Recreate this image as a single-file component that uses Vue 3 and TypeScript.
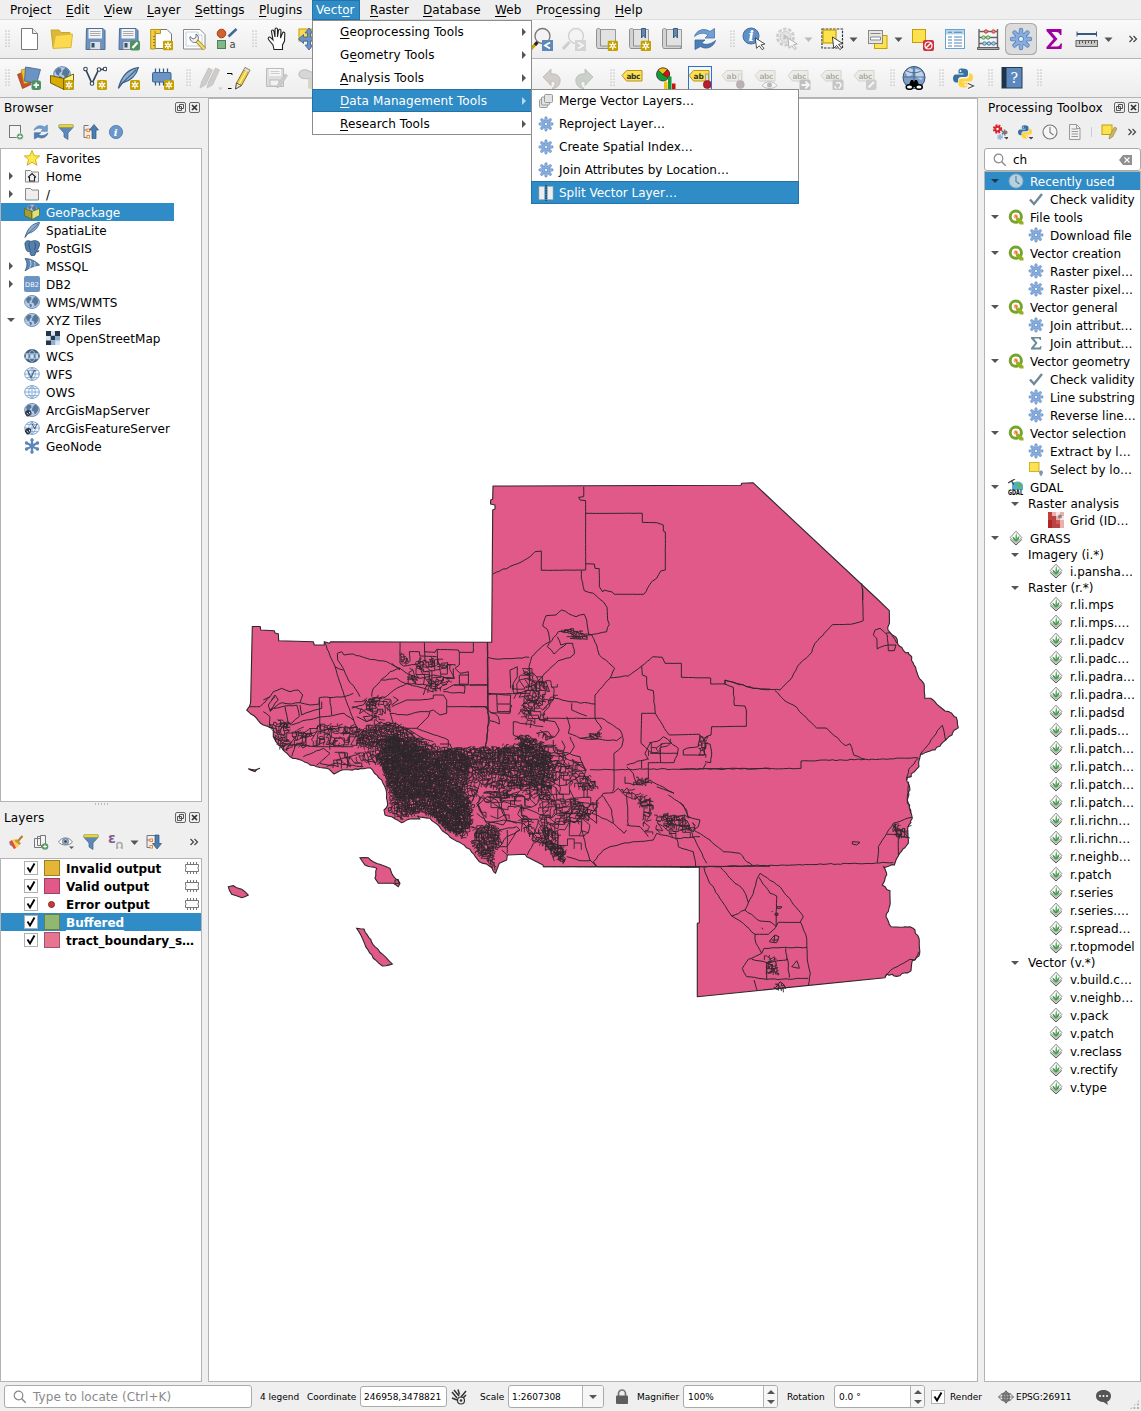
<script setup lang="ts">
interface ToolItem { icon: string; width: number; lead: number; on?: string }
type ToolSpec = [icon: string, center: number, state?: string]

const widths: Record<string, number> = { grip: 5, drop: 9, more: 12 }

function layoutTools(specs: ToolSpec[]): ToolItem[] {
  let edge = 0
  return specs.map(([icon, center, on]) => {
    const width = widths[icon] ?? 24
    const lead = center - width / 2 - edge
    edge = center + width / 2
    return { icon, width, lead, on }
  })
}

const menus: { text: [string, string, string]; width: number; open?: boolean }[] = [
  { text: ['Pro', 'j', 'ect'], width: 56 },
  { text: ['', 'E', 'dit'], width: 38 },
  { text: ['', 'V', 'iew'], width: 43 },
  { text: ['', 'L', 'ayer'], width: 48 },
  { text: ['', 'S', 'ettings'], width: 64 },
  { text: ['', 'P', 'lugins'], width: 57 },
  { text: ['Vect', 'o', 'r'], width: 54, open: true },
  { text: ['', 'R', 'aster'], width: 53 },
  { text: ['', 'D', 'atabase'], width: 72 },
  { text: ['', 'W', 'eb'], width: 41 },
  { text: ['Pro', 'c', 'essing'], width: 79 },
  { text: ['', 'H', 'elp'], width: 40 },
]

const vectorMenu: { text: [string, string, string]; on?: boolean }[] = [
  { text: ['', 'G', 'eoprocessing Tools'] },
  { text: ['G', 'e', 'ometry Tools'] },
  { text: ['', 'A', 'nalysis Tools'] },
  { text: ['', 'D', 'ata Management Tools'], on: true },
  { text: ['', 'R', 'esearch Tools'] },
]

const dataMenu = [
  { icon: 'merge', text: 'Merge Vector Layers…' },
  { icon: 'gear', text: 'Reproject Layer…' },
  { icon: 'gear', text: 'Create Spatial Index…' },
  { icon: 'gear', text: 'Join Attributes by Location…' },
  { icon: 'split', text: 'Split Vector Layer…', on: true },
]

const fileTools = layoutTools([
  ['grip', 7.5], ['new', 29], ['open', 62], ['save', 95], ['saveas', 129], ['layout', 162], ['layoutmgr', 195], ['style', 227],
  ['grip', 254.5], ['hand', 277], ['pan', 309], ['zoomprev', 542], ['zoomnext', 574], ['bookmark', 607], ['bookmarknew', 640],
  ['bookmarks', 672], ['refresh', 705], ['grip', 732], ['identify', 754], ['action', 787], ['drop', 808.5, 'dim'], ['select', 832],
  ['drop', 853.5], ['form', 878], ['drop', 898.5], ['deselect', 923], ['table', 955], ['abacus', 988], ['gear', 1021, 'checked'],
  ['sigma', 1054], ['ruler', 1087], ['drop', 1108.5], ['more', 1133],
])

const editTools = layoutTools([
  ['grip', 7.5], ['dsm', 29], ['gpkg', 62], ['vertex', 95], ['feathernew', 128], ['chipnew', 162], ['grip', 188], ['pencils', 211],
  ['pencil', 239], ['saveedits', 276], ['blob', 307], ['undo', 552], ['redo', 584], ['grip', 612], ['label', 633], ['diagram', 667],
  ['labelpin', 700, 'framed'], ['labelpin', 733, 'faded'], ['labeleye', 766, 'faded'], ['labelmove', 799, 'faded'],
  ['labelturn', 832, 'faded'], ['labeledit', 865, 'faded'], ['grip', 892], ['search', 914], ['grip', 941], ['python', 963],
  ['grip', 990], ['help', 1012], ['grip', 1039],
])

const browser: { text: string; icon: string; arrow?: string; child?: boolean; on?: boolean }[] = [
  { text: 'Favorites', icon: 'star' },
  { text: 'Home', icon: 'home', arrow: 'right' },
  { text: '/', icon: 'folder', arrow: 'right' },
  { text: 'GeoPackage', icon: 'gpkgs', on: true },
  { text: 'SpatiaLite', icon: 'feather' },
  { text: 'PostGIS', icon: 'elephant' },
  { text: 'MSSQL', icon: 'mssql', arrow: 'right' },
  { text: 'DB2', icon: 'db2', arrow: 'right' },
  { text: 'WMS/WMTS', icon: 'globe' },
  { text: 'XYZ Tiles', icon: 'globe', arrow: 'down' },
  { text: 'OpenStreetMap', icon: 'tiles', child: true },
  { text: 'WCS', icon: 'wcs' },
  { text: 'WFS', icon: 'wfs' },
  { text: 'OWS', icon: 'ows' },
  { text: 'ArcGisMapServer', icon: 'arcmap' },
  { text: 'ArcGisFeatureServer', icon: 'arcfeat' },
  { text: 'GeoNode', icon: 'geonode' },
]

const layers = [
  { text: 'Invalid output', tone: 'amber', memory: true },
  { text: 'Valid output', tone: 'pink', memory: true },
  { text: 'Error output', tone: 'dot', memory: true },
  { text: 'Buffered', tone: 'green', on: true },
  { text: 'tract_boundary_s…', tone: 'rose' },
]

type Row = [depth: number, icon: string, text: string, on?: boolean]
const toolbox: Row[] = [
  [0, 'clock', 'Recently used', true], [1, 'check', 'Check validity'],
  [0, 'qgis', 'File tools'], [1, 'gear', 'Download file'],
  [0, 'qgis', 'Vector creation'], [1, 'gear', 'Raster pixel…'], [1, 'gear', 'Raster pixel…'],
  [0, 'qgis', 'Vector general'], [1, 'gear', 'Join attribut…'], [1, 'sum', 'Join attribut…'],
  [0, 'qgis', 'Vector geometry'], [1, 'check', 'Check validity'], [1, 'gear', 'Line substring'], [1, 'gear', 'Reverse line…'],
  [0, 'qgis', 'Vector selection'], [1, 'gear', 'Extract by l…'], [1, 'selectloc', 'Select by lo…'],
  [0, 'gdal', 'GDAL'], [1, '', 'Raster analysis'], [2, 'grid', 'Grid (ID…'],
  [0, 'grass', 'GRASS'], [1, '', 'Imagery (i.*)'], [2, 'grass', 'i.pansha…'],
  [1, '', 'Raster (r.*)'],
  ...['r.li.mps', 'r.li.mps.…', 'r.li.padcv', 'r.li.padc…', 'r.li.padra…', 'r.li.padra…', 'r.li.padsd', 'r.li.pads…', 'r.li.patch…',
    'r.li.patch…', 'r.li.patch…', 'r.li.patch…', 'r.li.richn…', 'r.li.richn…', 'r.neighb…', 'r.patch', 'r.series', 'r.series.…',
    'r.spread…', 'r.topmodel'].map((t): Row => [2, 'grass', t]),
  [1, '', 'Vector (v.*)'],
  ...['v.build.c…', 'v.neighb…', 'v.pack', 'v.patch', 'v.reclass', 'v.rectify', 'v.type'].map((t): Row => [2, 'grass', t]),
]

/* ---- map canvas ---- */
type Pt = [number, number]
let seed = 20117
function rnd(): number {
  seed = (seed * 1664525 + 1013904223) % 4294967296
  return seed / 4294967296
}
const parse = (s: string): Pt[] => s.trim().split(/\s+/).map((p) => p.split(',').map(Number) as Pt)
const toPath = (pts: Pt[]): string => 'M' + pts.map((p) => p[0].toFixed(1) + ' ' + p[1].toFixed(1)).join('L')

function rough(pts: Pt[], amp: number, step: number): Pt[] {
  const out: Pt[] = [pts[0]]
  for (let i = 1; i < pts.length; i++) {
    const [x0, y0] = pts[i - 1]
    const [x1, y1] = pts[i]
    // Survey lines that follow a parallel or meridian stay straight.
    const straight = Math.abs(x1 - x0) < 1 || Math.abs(y1 - y0) < 1
    const n = Math.floor(Math.hypot(x1 - x0, y1 - y0) / step)
    const a = straight ? amp * 0.2 : amp
    for (let k = 1; k < n; k++) {
      out.push([x0 + ((x1 - x0) * k) / n + (rnd() - 0.5) * a, y0 + ((y1 - y0) * k) / n + (rnd() - 0.5) * a])
    }
    out.push(pts[i])
  }
  return out
}

const north = parse('250.7,700 252.3,626.5 260.3,626.5 260.7,630 274.3,630.7 275,633 278.3,633.7 278.7,640.7 313.3,641.7 314.3,645 324.3,645 324.3,641.7 329.3,643.3 330.7,641.7 491.7,642.3 492.7,510 495,509 495,505 490.5,504 490.7,500 492.7,499.3 493,486 741,485.3 741.7,483.3 753,482.7 878.3,600 889.3,610.7 889.5,623')
const east = parse('889.5,623 888,630 890.7,633.3 896,637.3 898.3,645 911.7,656.7 914,665 917.3,673.3 924.3,686 924.7,698.3 930.7,698.3 945,711 951.7,713.3 957.3,720.7 958.3,727.7 945.7,740 935,750 920.7,754 918.7,761.7 919,766.7 906.7,780 910,790 907.3,800 910.7,810 912.3,818.3 907.7,830 908.3,843.3 898.3,856 894.3,865 883.3,866.7 886.7,875 882.3,885 890,890.7 890,905 886,916.7 891,926.7 900,927.3 910,926.7 915,930 919,938.3 919.7,953.3 911.7,963.3 911,970.7 900,975.7 886.7,974 885,977.7')
const south = parse('885,977.7 697.3,996.7 697.3,923.3 699.3,922.7 699.3,867.2 543.3,866.7 543,865 526.7,856.7 525,854.3 507.3,855 506.7,860 499.3,863.3 495.5,873.3')
const coast = parse('495.5,873.3 489.3,866 479.3,861.7 470,849.3 450,837.3 430,818.3 417.3,816 420,819 410,819 401.7,822.7 391.7,816.7 385,815 384,810 387.7,805 386.7,793.3 381.7,780 370,767.7 340,770.7 334,774 329.3,769.3 316.7,766.7 290,756.7 278.3,745 273.3,736.7 273.3,728.3 263.3,725 246.7,710 249.3,706.7 250.7,700')
const land = toPath([...north, ...rough(east, 2.2, 2.5), ...south, ...rough(coast, 1.3, 3)]) + 'Z'

const islands = [
  '360,857.7 368.3,857.7 373.3,861.7 390,868.3 391.7,873.3 400,883.3 398.3,886.7 393.3,883.3 378.3,883.3 375,878.3 376.7,868.3 365,865 360,857.7',
  '228.3,886.7 233.3,885.7 241.7,889.3 248.3,895 241.7,897.7 231.7,894.3 228.3,886.7',
  '356.7,928.3 364,929 373.3,945 392.3,964 382.3,966 373.3,958.3 365.7,946.7 361.7,936.7 356.7,928.3',
  '248.3,768.7 255,770 260,768.3 255,771.7 248.3,768.7',
].map((s) => toPath(rough(parse(s), 1.2, 3)) + 'Z').join('')

// Tract borders, digitised at three times canvas scale from each sheet's origin.
const sheets: { ox: number; oy: number; lines: string[] }[] = [
  { ox: 220, oy: 600, lines: [
    '313,125 345,200 372,285 412,385', '88,320 120,320 150,290 160,275 185,265 210,275 235,270 248,285 240,308 215,312 185,308 150,332 145,315 165,290',
    '240,308 270,315 298,312 298,293 372,290 400,280', '130,335 150,350 148,380', '150,335 160,325 195,318 230,315 238,350 215,370 205,370 195,320',
    '240,315 245,345 270,335 305,325 305,305', '330,293 335,345', '298,300 300,390', '215,375 260,360 310,350 345,345 372,340 400,360',
    '352,160 365,155 372,165 400,162 440,175 500,185 540,205', '352,160 353,180 370,205 385,240 405,265 420,290', '345,200 370,210',
    '540,127 540,190', '613,127 615,185', '540,190 550,198 600,190', '570,180 568,155 598,155 600,168 650,170',
    '613,155 645,157 650,148 715,150 718,157 760,157 760,127', '652,150 653,190', '718,157 718,195 705,205 720,220 745,215 745,253 718,252 718,225 745,225',
    '670,270 700,255 803,255', '702,255 735,258 733,280 670,275', '670,285 680,300 680,320 800,320 803,330', '803,127 805,370 797,445',
    '455,290 460,265 480,245 510,215 540,205 560,220', '485,240 530,235 555,250', '515,190 540,210', '490,295 530,265 560,250 620,255 610,285',
    '515,320 560,300 600,300 640,295 640,285 670,285', '510,340 560,345 600,335 625,335 640,330 660,345 680,340 680,320',
    '510,340 520,370 560,385 590,385 625,350 630,335', '590,385 630,400 685,420 685,440', '395,325 430,315 440,300', '410,350 440,365 470,350',
    '397,320 430,330 450,345', '160,410 190,430 240,435 290,440 350,440 400,440', '215,470 230,430 250,430 270,440', '250,470 310,445 330,460 290,495',
    '300,490 355,500 350,480 390,470 420,460', '380,505 390,470', '320,500 345,490 430,500', '770,620 800,590 830,600 860,660 890,670',
    '770,640 800,665 850,675 860,660', '840,690 890,680 900,690', '840,740 860,740 895,690', '155,300 165,285 175,300 150,330',
    '243,437 250,432 256,440 248,444 243,437', '525,840 535,838 538,850 525,850 525,840', '803,280 830,282 832,335 870,335 872,285 832,282',
    '832,312 870,312', '805,330 835,350 838,372 810,362', '660,432 690,432 695,445', '862,690 862,760',
    '560,220 600,235 640,225 700,235 700,205', '600,170 600,210', '555,250 600,262 640,275', '130,300 150,290', '520,290 535,300 515,315',
    '560,385 600,410 640,425', '540,380 570,400 600,425 640,440', '520,370 500,375 480,365', '440,365 430,350 460,345',
  ] },
  { ox: 470, oy: 470, lines: [
    '341,50 341,80 326,82 330,90 347,92 347,300 214,301 214,243 195,245 180,260 150,278 69,312',
    '347,130 517,130 517,157 560,158 580,165 580,183 586,186 586,300 572,303 560,325 545,335 521,373 433,373 427,366 402,360 398,366 388,350 388,296 375,295 373,282 347,281',
    '334,302 334,325 343,362 370,370 400,395 411,412 413,450 418,463 410,485 370,493 357,495 350,450 343,433 318,440 275,420 258,435 228,437 218,468 232,478 240,515',
    '240,515 215,530 185,560 177,590 180,630 197,640 240,595 265,572 300,563 313,552 308,520 290,520 252,552 232,530 265,485 300,478 330,490 365,495',
    '262,500 272,525 290,520', '365,495 380,525 388,555 434,595 420,625 375,675 375,745', '53,562 75,567 178,562', '52,517 53,730 58,740 47,835',
    '420,623 475,618 515,588 548,560 577,562 585,580 634,580 634,622 722,624 722,642 765,642 765,630 850,655 900,659',
    '765,642 790,652 793,706 825,708 829,720 829,769 725,770 723,795 708,800 700,815',
    '515,588 517,615 530,620 533,658 550,662 556,730 565,745 590,785 598,795 690,793', '515,730 556,730', '515,730 513,820 535,840',
    '535,870 525,850 540,820 570,810 580,800 600,815 625,835 622,855 612,878 535,878 535,927', '540,850 622,850', '570,835 572,878',
    '640,840 650,835 685,830 690,795 705,815 703,855 640,855 640,840', '705,820 720,822 725,855 722,878 705,875', '700,895 708,880',
    '360,899 900,895', '375,745 220,745', '255,685 300,695 375,702', '250,690 220,730 220,745', '305,700 305,720 350,738',
    '375,745 395,745 450,780 460,810 455,830 432,850 432,955 428,965', '290,740 300,770 295,790 330,805 380,795 395,775 375,745',
    '330,805 440,812 455,800', '220,750 255,755 268,780 255,800 240,805 210,780', '250,810 250,840 275,860 285,830 275,812',
    '300,800 313,830 300,850 275,860 320,880 350,900', '130,755 130,795 160,810 200,830 240,850', '130,755 220,770', '53,675 75,672 180,670',
    '60,728 120,730 125,705', '0,645 53,645', '0,710 45,710 53,720', '122,655 120,600 142,590 142,620 130,640 130,660',
    '465,920 465,940 510,945 540,930 600,965 612,970 560,950', '595,975 640,1005 655,1040', '470,890 490,910 500,945', '470,885 535,865', '515,895 515,870',
    '380,995 400,970 430,968 445,955 470,980 475,1065', '380,990 380,1010 365,1030 430,1060 462,1090 470,1080', '378,1010 380,1060 345,1030',
    '395,975 425,1020 430,1060', '470,1065 510,1070 535,1100', '380,1190 370,1175 400,1140 420,1130 490,1115 550,1110 560,1090 620,1105 690,1100',
    '670,1080 720,1110 760,1145 810,1150 830,1175 850,1188', '670,1100 690,1140 710,1180', '620,1105 625,1130 670,1145 677,1190',
    '655,1040 690,1050 685,1070 670,1080', '335,1080 350,1140 360,1170 380,1188', '290,1160 330,1172 360,1172', '172,1155 190,1120 220,1100',
    '88,1130 110,1100 150,1080', '112,1155 95,1140', '40,980 100,1020 110,1050', '100,1050 160,1060 200,1100 285,1175', '150,1010 230,1040',
    '220,1190 900,1189', '40,975 20,1000 50,1060 100,1050', '345,900 330,860 260,840',
    '360,800 370,790 385,805 365,808', '200,790 235,785 245,800', '145,810 150,795 170,800', '290,500 350,500 352,508 300,505',
  ] },
  { ox: 680, oy: 600, lines: [
    '548,-35 548,0 550,62 512,73 457,74 405,130 395,157 360,190 330,240 300,270 222,265 135,241 135,253',
    '548,0 545,-50', '285,272 315,303 350,322 370,345 410,384 438,384 497,437 510,431 522,466 555,478',
    '0,508 363,505 363,483 715,474', '722,462 787,376 797,420', '715,474 686,508 680,540',
    '592,148 590,115 580,105 585,90 600,85 622,105 625,152 643,152 648,135 625,135 592,146', '618,100 630,98 650,130',
    '0,802 220,797 640,788', '592,788 595,740 640,670 695,652', '655,712 655,765', '620,703 665,703', '645,670 650,710 685,712 665,690 640,680',
    '517,725 540,727 530,735 517,732 517,725', '0,607 20,630 25,655', '122,803 150,835 190,870 205,908', '650,690 665,690 665,705 650,705',
    '72,803 85,840 155,948 195,930 215,890 232,835 240,820 300,860 370,950 360,967', '237,832 270,880 290,888 288,980',
    '195,930 240,963 270,965 288,980 295,967 362,967 380,1015 382,1080 391,1120 385,1155', '155,948 190,970 225,1003 265,1003 288,982',
    '225,1003 228,1030 245,1060 252,1045 380,1042', '245,1060 205,1078 187,1105 200,1130 260,1138 385,1135', '215,1078 260,1088 320,1080 317,1045',
    '322,1075 328,1133', '222,1140 232,1172', '260,1088 260,1138', '335,1100 350,1082 358,1105 335,1100', '268,1025 285,1005 297,1010 290,1028 268,1025',
    '275,1020 295,1020', '284,1007 282,1026', '292,920 305,920 303,925 292,925 292,920', '285,940 294,940 294,946 285,946 285,940',
    '245,983 249,988', '275,933 278,936', '615,1130 640,1105 690,1078 705,1080 717,1055', '686,545 682,600 692,640', '285,1165 300,1145 315,1160',
  ] },
]
const borders = sheets
  .map(({ ox, oy, lines }) => lines.map((l) => toPath(rough(parse(l).map(([x, y]): Pt => [ox + x / 3, oy + y / 3]), 1.1, 3.5))).join(''))
  .join('')

function inside([x, y]: Pt, poly: Pt[]): boolean {
  let hit = false
  for (let i = 0, j = poly.length - 1; i < poly.length; j = i++) {
    const [xi, yi] = poly[i]
    const [xj, yj] = poly[j]
    if (yi > y !== yj > y && x < ((xj - xi) * (y - yi)) / (yj - yi) + xi) hit = !hit
  }
  return hit
}

function mesh(shape: string, size: number, drop: number, tilt = 0): string {
  const poly = parse(shape)
  const xs = poly.map((p) => p[0])
  const ys = poly.map((p) => p[1])
  const cx = (Math.min(...xs) + Math.max(...xs)) / 2
  const cy = (Math.min(...ys) + Math.max(...ys)) / 2
  const reach = Math.hypot(Math.max(...xs) - cx, Math.max(...ys) - cy)
  const n = Math.ceil((reach * 1.15) / size) + 1
  const c = Math.cos(tilt)
  const s = Math.sin(tilt)
  const phase = rnd() * 6
  const grid: Pt[][] = []
  for (let j = -n; j <= n; j++) {
    const row: Pt[] = []
    for (let i = -n; i <= n; i++) {
      const u = (i + (rnd() - 0.5) * 0.95 + Math.sin(j * 0.8 + phase) * 0.7) * size
      const v = (j + (rnd() - 0.5) * 0.95 + Math.sin(i * 0.7 + phase * 2) * 0.7) * size
      row.push([cx + u * c - v * s, cy + u * s + v * c])
    }
    grid.push(row)
  }
  let d = ''
  const edge = (a: Pt, b: Pt) => {
    if (rnd() >= drop && inside(a, poly) && inside([(a[0] + b[0]) / 2, (a[1] + b[1]) / 2], poly)) {
      const r = rnd()
      if (r < 0.4) d += toPath([a, [b[0], a[1]], b])
      else if (r < 0.6) d += toPath([a, [(a[0] + b[0]) / 2 + (rnd() - 0.5) * size * 0.5, (a[1] + b[1]) / 2 + (rnd() - 0.5) * size * 0.5], b])
      else d += toPath([a, b])
    }
  }
  for (let j = 0; j < 2 * n; j++) {
    for (let i = 0; i < 2 * n; i++) {
      edge(grid[j][i], grid[j][i + 1])
      edge(grid[j][i], grid[j + 1][i])
    }
  }
  return d
}

const tracts = [
  mesh('374,756 384,748 396,742 415,744 432,752 452,748 470,756 470,775 462,790 474,806 470,825 458,836 448,832 432,817 420,812 404,816 396,808 392,790 386,778', 2.1, 0.06),
  mesh('374,756 380,746 392,735 420,738 445,747 500,746 540,744 552,760 545,782 520,790 480,788 468,808 474,826 464,840 450,832 430,815 418,812 402,820 388,813 390,800 384,778', 2.8, 0.1),
  mesh('382,762 396,752 425,754 445,760 450,780 440,795 400,800 388,790', 2.3, 0.05, 0.6),
  mesh('430,795 462,785 470,800 463,835 450,832 432,815', 2.6, 0.08, 0.7),
  mesh('440,748 500,746 512,750 505,775 475,775 455,770', 3, 0.1, 0.5),
  mesh('473,827 490,822 501,829 501,847 495,850 496,871 487,862 480,858 471,846', 2.4, 0.06, 0.4),
  mesh('473,830 490,824 499,831 499,845 490,855 478,855', 3.4, 0.1),
  mesh('354,730 370,724 393,721 410,730 422,742 400,750 372,750 357,746', 2.3, 0.06),
  mesh('357,732 392,723 405,732 395,746 360,745', 3.2, 0.12, 0.5),
  mesh('374,750 396,734 425,748 440,752 420,760 380,766', 2.6, 0.1, 0.4),
  mesh('500,745 520,742 545,750 560,765 552,790 530,788 500,782', 3, 0.12),
  mesh('515,735 530,735 555,752 552,765 530,768 518,755', 2.9, 0.1, 0.6),
  mesh('535,740 550,742 570,757 585,764 590,775 570,772 550,764', 4, 0.2, 0.4),
  mesh('550,758 570,764 590,775 598,790 580,788 560,780 548,790 530,800 520,790', 4.4, 0.18, 0.4),
  mesh('576,776 592,776 598,788 586,792 578,788', 2.8, 0.15),
  mesh('500,762 560,762 590,790 597,805 588,835 566,862 545,855 520,828 505,805 480,796 490,790', 8, 0.3, 0.3),
  mesh('532,782 550,786 550,800 535,800', 2.9, 0.12),
  mesh('540,787 562,797 597,802 600,812 588,822 560,826 558,840 566,862 554,858 538,835', 4, 0.2),
  mesh('536,830 545,826 560,828 558,842 568,850 560,862 548,850', 3.3, 0.15, 0.7),
  mesh('518,817 526,815 540,832 558,848 552,852 530,838', 3.2, 0.15, 0.7),
  mesh('556,843 566,848 566,864 557,860 548,845', 2.6, 0.1, 0.6),
  mesh('573,797 587,805 591,815 580,819 572,810', 2.6, 0.1),
  mesh('470,790 500,780 530,795 520,815 500,822 480,822', 6.5, 0.35, 0.5),
  mesh('480,792 505,788 520,800 500,798', 3.2, 0.25),
  mesh('268,724 282,720 290,726 288,735 292,748 283,752 275,742 273,732', 2.7, 0.12),
  mesh('276,718 284,718 292,726 284,730', 2.4, 0.1, 0.5),
  mesh('292,731 313,731 313,738 292,738', 2.7, 0.15),
  mesh('285,728 360,724 366,745 340,748 318,746 290,748', 5.6, 0.25),
  mesh('316,724 357,725 358,735 318,733', 3, 0.2),
  mesh('320,735 352,736 345,746 312,745', 3.6, 0.25),
  mesh('325,752 374,750 374,764 350,768 330,766', 6, 0.3),
  mesh('352,752 374,750 376,764 360,766', 3.6, 0.2),
  mesh('364,698 380,695 392,698 391,712 376,716 366,710', 3.1, 0.15, 0.3),
  mesh('366,698 377,697 376,706 370,706', 2.3, 0.1),
  mesh('352,702 366,696 376,718 364,722', 5.5, 0.3),
  mesh('370,714 380,712 384,722 374,724', 3.2, 0.2),
  mesh('399,650 404,655 410,660 407,665 400,662', 2.2, 0.08),
  mesh('410,660 432,656 452,664 454,680 436,692 425,688 420,676 406,682', 4.8, 0.2),
  mesh('420,658 434,658 434,667 413,668', 2.8, 0.15),
  mesh('430,663 450,663 452,669 432,668', 3, 0.2),
  mesh('426,677 444,680 441,692 430,690', 2.8, 0.15, 0.5),
  mesh('406,676 418,672 420,682 408,684', 3.8, 0.2),
  mesh('524,668 530,668 540,680 555,680 556,700 545,708 544,722 530,726 518,716 526,700 512,696 510,688', 4.6, 0.2),
  mesh('530,680 546,682 545,702 530,716 518,716', 3.3, 0.15, 0.6),
  mesh('520,667 530,667 532,680 522,680', 4.5, 0.2),
  mesh('536,733 545,732 553,737 545,741', 2.5, 0.15),
  mesh('518,738 530,735 540,742 532,750 520,748', 2.7, 0.1),
  mesh('556,631 570,627 580,630 589,637 575,639 568,634', 2.4, 0.1),
  mesh('586,734 600,731 603,738 590,739', 2.4, 0.15),
  mesh('635,777 648,778 652,785 634,785', 2.4, 0.1),
  mesh('618,788 632,786 640,795 652,800 652,814 642,814 638,802 626,796', 4.2, 0.2),
  mesh('632,792 650,797 653,808 640,808', 2.7, 0.1),
  mesh('652,815 682,812 698,824 692,832 680,828 655,832', 4.2, 0.15),
  mesh('657,814 682,815 692,830 665,827', 2.9, 0.15),
  mesh('640,812 650,810 652,836 644,832', 4, 0.25),
  mesh('668,828 692,828 700,837 668,837', 5, 0.25),
  mesh('697,735 706,736 706,757 698,755', 3.4, 0.2),
  mesh('648,742 672,740 665,752 646,755', 5, 0.2),
  mesh('765,955 776,957 779,975 765,974', 2.5, 0.1),
  mesh('773,982 785,983 786,991 774,990', 2.8, 0.15),
  mesh('891,823 900,824 902,838 894,835', 2.7, 0.15),
  mesh('896,829 910,826 908,838 896,837', 3.6, 0.2),
].join('')
</script>

<template>
  <div class="window">
    <svg class="defs" width="0" height="0" aria-hidden="true">
      <symbol id="i-badge" viewBox="0 0 10 10"><rect width="10" height="10" rx="1.500" fill="#c4a000" /><path d="M5 1.300v7.400M1.800 3.100l6.400 3.800M8.200 3.100L1.800 6.900" stroke="#fff" stroke-width="1.300" /><circle cx="5" cy="5" r="1.800" fill="#fff" /><circle cx="5" cy="5" r=".8" fill="#c4a000" /></symbol>
      <symbol id="i-new" viewBox="0 0 24 24"><path d="M4.500 1.500h11l5 5v16h-16z" fill="#fff" stroke="#777" /><path d="M15.500 1.500v5h5" fill="#eee" stroke="#777" /></symbol>
      <symbol id="i-open" viewBox="0 0 24 24"><path d="M1 3h8l2 2.500h9v15H3z" fill="#d9b83a" stroke="#c9a72c" /><path d="M5.500 8.500L22.500 7l-1.500 13.500L3 21.500z" fill="#fcd94f" stroke="#dcb93b" /></symbol>
      <symbol id="i-save" viewBox="0 0 24 24"><path d="M3.500 1.500h16.500l2 2v19h-19z" fill="#6b93c4" stroke="#4b6d98" /><rect x="5.500" y="2" width="13.500" height="9.500" fill="#f4f4f4" /><path d="M7 4.500h10.500M7 6.500h10.500M7 8.500h10.500" stroke="#aaa" /><rect x="7" y="14.500" width="10.500" height="8" fill="#dce3ea" stroke="#777" stroke-width=".6" /><rect x="8.500" y="16" width="3" height="4.500" fill="#34526e" /></symbol>
      <symbol id="i-saveas" viewBox="0 0 24 24"><use href="#i-save" x="-1" width="24" height="24" /><rect x="13" y="13.500" width="10" height="10" rx="2" fill="#4f9160" /><path d="M15.500 21l5-5.500" stroke="#fff" stroke-width="2.200" /></symbol>
      <symbol id="i-layout" viewBox="0 0 24 24"><path d="M5 2.500h12l4.500 4.500v14.500H5z" fill="#fff" stroke="#777" /><path d="M.7 2.500h9.800v4H5v15.500H.7z" fill="#f4ce3d" stroke="#b8941b" /><path d="M3 9.500h2M3 12.500h2M3 15.500h2M3 18.500h2M5 4v2" stroke="#8a6d10" stroke-width=".8" /><use href="#i-badge" x="13" y="13.500" width="10" height="10" /></symbol>
      <symbol id="i-layoutmgr" viewBox="0 0 24 24"><path d="M.5 2.500h16.500l5 5v14.500H.5z" fill="#fff" stroke="#888" /><path d="M3 5h12v3h4v11H3z" fill="#fff" stroke="#bcd0ea" /><path d="M14 14l7.500 8" stroke="#a98b12" stroke-width="4" /><path d="M14 14l7.500 8" stroke="#f3dd73" stroke-width="2.200" /><path d="M7 9.500l3 2.500 3-1.500V7a4.500 4.500 0 0 1 2 6l-2 2.500a5 5 0 0 1-6-6z" fill="#eee" stroke="#666" stroke-width=".9" /></symbol>
      <symbol id="i-style" viewBox="0 0 24 24"><circle cx="6.500" cy="6.500" r="4.300" fill="#d1622f" stroke="#9d4319" /><path d="M13.500 9.500l8-7.500" stroke="#3d6a99" stroke-width="2.500" /><rect x="2.500" y="13.500" width="8" height="8" fill="#83b787" stroke="#4c7f51" /><text x="14.500" y="21" font-size="10" fill="#444" font-family="DejaVu Sans">a</text></symbol>
      <symbol id="i-hand" viewBox="0 0 24 24"><path d="M8 22.500L7 18 2.500 12.500c-1-2.500 1-3.300 2.500-1.500l2 2L5.500 4.500c0-2 2-2 2.500 0L9 10V2.500c0-2 2.500-2 2.500 0V10l1-6.500c.5-2 2.500-1.500 2.500.5L14.500 11l2-5c1-1.500 2.700-.8 2.300 1L18.500 14l-2 4v4.500z" transform="translate(1)" fill="#fff" stroke="#222" stroke-width="1.100" /></symbol>
      <symbol id="i-pan" viewBox="0 0 24 24"><rect x="2" y="2" width="20" height="12" fill="#fcd94f" stroke="#c4a000" /><path d="M12 1l4 5h-2.500v4h4V7.500l5 4.500-5 4.500V14h-4v4H16l-4 5-4-5h2.500v-4h-4v2.500L1.500 12l5-4.500V10h4V6H8z" fill="#6b93c4" stroke="#3d5f8a" stroke-width=".8" /></symbol>
      <symbol id="i-zoomprev" viewBox="0 0 24 24"><path d="M1 22l6-6.500" stroke="#c4a000" stroke-width="3" /><path d="M5 18l3-3.500" stroke="#222" stroke-width="3" /><circle cx="12.500" cy="9" r="7.500" fill="#f3f3f3" stroke="#777" stroke-width="1.300" /><rect x="12" y="13" width="11" height="11" fill="#5d88b8" /><path d="M20 15.500l-5 3 5 3" fill="none" stroke="#fff" stroke-width="1.800" /></symbol>
      <symbol id="i-zoomnext" viewBox="0 0 24 24"><g opacity=".4"><path d="M1 22l6.500-7" stroke="#999" stroke-width="3" /><circle cx="14" cy="9" r="7.500" fill="#f3f3f3" stroke="#999" stroke-width="1.300" /><rect x="13" y="13" width="11" height="11" fill="#aaa" /><path d="M16 15.500l5 3-5 3" fill="none" stroke="#fff" stroke-width="1.800" /></g></symbol>
      <symbol id="i-book" viewBox="0 0 24 24"><path d="M5 2.500h15.500v19H5z" fill="#e2e2e2" stroke="#999" /><path d="M1.500 3c0-2 4-2 4 0v16H20v2.500H2.500l-1-2z" fill="#d2d2d2" stroke="#888" stroke-width=".9" /></symbol>
      <symbol id="i-bookmark" viewBox="0 0 24 24"><use href="#i-book" width="24" height="24" /><use href="#i-badge" x="12.500" y="13.500" width="10.500" height="10.500" /></symbol>
      <symbol id="i-ribbon" viewBox="0 0 24 24"><path d="M13.500 1.500h4v9.500l-2-2.500-2 2.500z" fill="#5d88b8" stroke="#34526e" stroke-width=".9" /></symbol>
      <symbol id="i-bookmarknew" viewBox="0 0 24 24"><use href="#i-book" width="24" height="24" /><use href="#i-ribbon" width="24" height="24" /><use href="#i-badge" x="12.500" y="13.500" width="10.500" height="10.500" /></symbol>
      <symbol id="i-bookmarks" viewBox="0 0 24 24"><use href="#i-book" x="1" width="24" height="24" /><use href="#i-ribbon" width="24" height="24" /></symbol>
      <symbol id="i-refresh" viewBox="0 0 24 24"><path d="M1.500 9.500C3.500 3 11 .5 17 4.500L21.500 1.500V11h-9.500l3-3C11 5 6 6 1.500 9.500z" fill="#6f9fd4" stroke="#4274ab" stroke-width=".8" /><path d="M22.500 13.500C20.500 20.500 13 23 7.500 19.500L2 22.500V13h10l-3.500 3c4 2.500 9 1.500 14-2.500z" fill="#4d7eb8" stroke="#3a6599" stroke-width=".8" /></symbol>
      <symbol id="i-cursor" viewBox="0 0 14 16"><path d="M1 1l11 7-4.500 1 3.500 4-2 1.500-3.500-4.500-3 3z" fill="#fff" stroke="#222" stroke-width=".9" /></symbol>
      <symbol id="i-identify" viewBox="0 0 24 24"><circle cx="9" cy="9" r="8" fill="#5f8fc5" stroke="#3f6da3" /><text x="6.500" y="14" font-size="14" font-style="italic" font-weight="700" fill="#fff" font-family="DejaVu Serif">i</text><use href="#i-cursor" x="12" y="10" width="13" height="14" /></symbol>
      <symbol id="i-action" viewBox="0 0 24 24"><g opacity=".4"><circle cx="10.500" cy="10" r="8" fill="none" stroke="#999" stroke-width="3" stroke-dasharray="3.500 1.500" /><circle cx="10.500" cy="10" r="5.500" fill="#ccc" stroke="#888" /><path d="M8.500 7l5 3-5 3z" fill="#777" /><use href="#i-cursor" x="12" y="10" width="12" height="14" /></g></symbol>
      <symbol id="i-select" viewBox="0 0 24 24"><rect x="2" y="2" width="20.500" height="19" fill="none" stroke="#333" stroke-width="1.200" stroke-dasharray="2.500 1.200" /><rect x="3" y="3" width="13" height="13" fill="#fce24e" stroke="#c4a000" stroke-width="1.200" /><use href="#i-cursor" x="11" y="9" width="14" height="15" /></symbol>
      <symbol id="i-form" viewBox="0 0 24 24"><rect x="8.500" y="8.500" width="12.500" height="13" fill="#fce24e" stroke="#c4a000" /><rect x="2.500" y="3.500" width="14" height="13" fill="#e6e6e6" stroke="#888" /><path d="M4.500 6.500h10M4.500 10h10v3h-10z" stroke="#888" fill="#fff" /></symbol>
      <symbol id="i-deselect" viewBox="0 0 24 24"><rect x="1.500" y="2.500" width="13" height="13" fill="#fce24e" stroke="#c4a000" /><rect x="12" y="13" width="11" height="11" rx="2" fill="#cf2f3b" /><circle cx="17.500" cy="18.500" r="3.500" fill="none" stroke="#fff" stroke-width="1.200" /><path d="M15 21l5-5" stroke="#fff" stroke-width="1.400" /></symbol>
      <symbol id="i-table" viewBox="0 0 24 24"><rect x="2.500" y="2.500" width="19" height="19" fill="#fff" stroke="#6aa2cc" /><rect x="3" y="3" width="18" height="4.500" fill="#b3d8ee" /><path d="M5 5.200h4M11 5.200h8M5 10h4M11 10h8M5 13h4M11 13h8M5 16h4M11 16h8M5 19h4M11 19h8" stroke="#4f83b3" stroke-width="1.100" /></symbol>
      <symbol id="i-abacus" viewBox="0 0 24 24"><path d="M3 2v19M21.500 2v19M3 4.500h18.500M3 10.500h18.500M3 16.500h18.500" stroke="#666" stroke-width="1.400" /><path d="M1.500 20.500h21.500v2H1.500z" fill="#aaa" stroke="#444" stroke-width=".8" /><g fill="#eb8a85" stroke="#c33"><circle cx="10" cy="4.500" r="1.700" /><circle cx="17.500" cy="4.500" r="1.700" /></g><g fill="#b8e2b0" stroke="#4a9a48"><circle cx="7.500" cy="10.500" r="1.700" /><circle cx="12" cy="10.500" r="1.700" /></g><g fill="#b4d6f0" stroke="#3f78ad"><circle cx="8.500" cy="16.500" r="1.700" /><circle cx="13" cy="16.500" r="1.700" /><circle cx="17.500" cy="16.500" r="1.700" /></g></symbol>
      <symbol id="i-gear" viewBox="0 0 24 24"><g stroke="#5583bf" stroke-width="4.400" stroke-linecap="round"><path d="M12 3v18M3 12h18M5.600 5.600l12.800 12.800M18.400 5.600L5.600 18.400" /></g><circle cx="12" cy="12" r="6.500" fill="#5583bf" /><g stroke="#89aedd" stroke-width="2.800" stroke-linecap="round"><path d="M12 3v18M3 12h18M5.600 5.600l12.800 12.800M18.400 5.600L5.600 18.400" /></g><circle cx="12" cy="12" r="5.700" fill="#89aedd" /><circle cx="12" cy="12" r="2.600" fill="#e7edf5" stroke="#5583bf" /></symbol>
      <symbol id="i-sigma" viewBox="0 0 24 24"><path d="M4.500 2h15v6h-1.500c-.5-2-1.500-3-4-3H9.500l6 7-7 7.500h6.500c2 0 3-1 3.500-3h1.500L19.500 22H4.500v-2l7-8-7-8z" fill="#a100a1" /></symbol>
      <symbol id="i-ruler" viewBox="0 0 24 24"><path d="M2 7h19" stroke="#36597f" stroke-width="2" /><path d="M2 4.500v5M21.500 4.500v5" stroke="#36597f" /><rect x="1" y="13.500" width="21.500" height="6" fill="#c9c9c9" stroke="#666" /><path d="M4.500 14v3M7.500 14v2M10.500 14v3M13.500 14v2M16.500 14v3M19.500 14v2" stroke="#555" /></symbol>
      <symbol id="i-more" viewBox="0 0 12 24"><path d="M2.500 9l3 3-3 3M6.500 9l3 3-3 3" fill="none" stroke="#444" stroke-width="1.200" /></symbol>
      <symbol id="i-grip" viewBox="0 0 5 24"><path d="M1 3.500v17M4 3.500v17" stroke="#b8b8b8" stroke-width="1.200" stroke-dasharray="1.300 1.700" /></symbol>
      <symbol id="i-drop" viewBox="0 0 9 24"><path d="M.5 10.500h8L4.500 15z" fill="#555" /></symbol>

      <symbol id="i-dsm" viewBox="0 0 24 24"><path d="M.5 8.500l9-4 4.500 14-8.500 4z" fill="#c8532a" stroke="#8e3515" stroke-width=".7" /><path d="M4 4l9-2.500 3 13.500-9 3z" fill="#eec22a" stroke="#a9850e" stroke-width=".7" /><path d="M8.500 1l15 2.500-4 14-12-2.500z" fill="#6b93c4" stroke="#43668f" stroke-width=".8" /><rect x="14.500" y="14.500" width="9.500" height="9.500" rx="2" fill="#4f9160" /><path d="M19.200 16.500v5.500M16.500 19.200h5.500" stroke="#fff" stroke-width="1.700" /></symbol>
      <symbol id="i-globe" viewBox="0 0 18 16"><ellipse cx="9" cy="8" rx="8.300" ry="7.300" fill="#b7cbe6" stroke="#5f84ad" /><path d="M2 5l3-3 3 .5.500 3-2 1.500-.5 3-2.500-1.500zM10 4l3-2.500 3.500 4-1 4-2 2.500-1.500 1-1-3.500-2.500-1zM6 10l2.500.5.500 2-2 2z" fill="#587899" /></symbol>
      <symbol id="i-gpkg" viewBox="0 0 24 24"><use href="#i-globe" x="3" y="0" width="18" height="16" /><path d="M.5 9.500l13.500 3v11L.5 17z" fill="#d9ac00" stroke="#554000" stroke-width=".8" /><path d="M14 12.500l9.500-4.500v10L14 23.500z" fill="#fff27a" stroke="#554000" stroke-width=".8" /><use href="#i-badge" x="14" y="14" width="10" height="10" /></symbol>
      <symbol id="i-gpkgs" viewBox="0 0 16 16"><use href="#i-globe" x="2.500" y="0" width="11" height="10" /><path d="M.5 4.500l7.500 3v8L.5 11.500z" fill="#a3a030" stroke="#5c5c20" stroke-width=".7" /><path d="M8 7.500l7.500-3v7L8 15.500z" fill="#d9e27c" stroke="#5c5c20" stroke-width=".7" /></symbol>
      <symbol id="i-vertex" viewBox="0 0 24 24"><path d="M2.500 3L9 17.500 15.500 4 22 3" fill="none" stroke="#345" stroke-width="1.700" /><g fill="#fff" stroke="#345" stroke-width="1.100"><circle cx="2.500" cy="3" r="1.800" /><circle cx="9" cy="17.500" r="1.800" /><circle cx="16" cy="3.500" r="1.800" /><circle cx="22" cy="3" r="1.800" /></g><use href="#i-badge" x="14" y="14" width="10" height="10" /></symbol>
      <symbol id="i-feather" viewBox="0 0 16 16"><path d="M1 15.500C3 8 7 1.500 15.500.5 14 6 10 10 4 11.500z" fill="#8fb1d6" stroke="#3d5f85" stroke-width=".9" /><path d="M3 12.500L14 2" stroke="#3d5f85" stroke-width=".8" /></symbol>
      <symbol id="i-feathernew" viewBox="0 0 24 24"><use href="#i-feather" x="0" y="1" width="24" height="22" /><use href="#i-badge" x="14" y="14" width="10" height="10" /></symbol>
      <symbol id="i-chipnew" viewBox="0 0 24 24"><path d="M5.500 2.500v17M9.500 2.500v17M13.500 2.500v17M17.500 2.500v17" stroke="#345b80" stroke-width="1.300" /><rect x="2.500" y="6.500" width="18.500" height="9.500" rx="1" fill="#6b93c4" stroke="#3f6690" /><use href="#i-badge" x="14" y="14" width="10" height="10" /></symbol>
      <symbol id="i-pencils" viewBox="0 0 24 24"><g fill="#cfcbc8" stroke="#bbb" stroke-width=".7"><path d="M1 22l1.500-6L9.500 2l4 2L6.500 19z" /><path d="M8 22l1.500-6 7-14 4 2-7 15z" /></g><path d="M19 21.500h5l-2.500 2.500z" fill="#ccc" /></symbol>
      <symbol id="i-pencil" viewBox="0 0 24 24"><path d="M0 7.500h5v1.500M1 22.500h3.500" fill="none" stroke="#000" /><path d="M8.500 23l1-6L18 1.500l5 2.700L14.500 19.500z" fill="#eecb3c" stroke="#6d5a0c" stroke-width=".8" /><path d="M18 1.500l5 2.700-1.500 2.500-5-2.700z" fill="#ddd" stroke="#777" stroke-width=".5" /><path d="M9.500 17l5 2.500-6 3.500z" fill="#efe0c8" stroke="#444" stroke-width=".8" /><path d="M12 18L20 4" stroke="#fff5a8" stroke-width="1.200" /></symbol>
      <symbol id="i-saveedits" viewBox="0 0 24 24"><path d="M2.500 2.500h17v18h-17z" fill="#ddd" stroke="#bbb" /><rect x="5" y="3" width="12" height="7" fill="#f5f5f5" /><path d="M6.500 5.500h9M6.500 7.500h9" stroke="#ccc" /><rect x="6" y="14" width="9" height="6" fill="#f2f2f2" stroke="#bbb" /><path d="M13 22l1-4 7-10 2.500 1.500-7 10.500z" fill="#d0cac6" stroke="#bbb" stroke-width=".7" /></symbol>
      <symbol id="i-blob" viewBox="0 0 24 24"><path d="M4 9c-1-6 8-6 10-4s8 0 8 4-5 5-8 4-9 1-10-4z" fill="#d6d6d6" stroke="#bbb" /><rect x="13" y="13" width="10" height="10" rx="2" fill="#d6d6c8" /></symbol>
      <symbol id="i-undo" viewBox="0 0 24 24"><path d="M3 11l8-8v5c7-1 10 4 9 8-1 5-5 6.500-8 6.500 4-2.500 5-7.500-1-7.500v4.500z" fill="#d0cdca" stroke="#bbb6b2" stroke-width=".8" /></symbol>
      <symbol id="i-redo" viewBox="0 0 24 24"><path d="M21 11l-8-8v5c-7-1-10 4-9 8 1 5 5 6.500 8 6.500-4-2.500-5-7.500 1-7.500v4.500z" fill="#cbd0cb" stroke="#b4bab4" stroke-width=".8" /></symbol>
      <symbol id="i-tag" viewBox="0 0 24 24"><path d="M1 9.500L5.500 4.500h15.500v10.500H5.500z" fill="#fbe14f" stroke="#b8941b" /></symbol>
      <symbol id="i-label" viewBox="0 0 24 24"><use href="#i-tag" width="24" height="24" /><text x="5.500" y="12.500" font-size="7.500" font-weight="700" fill="#333" font-family="DejaVu Sans" textLength="14">abc</text></symbol>
      <symbol id="i-diagram" viewBox="0 0 24 24"><circle cx="8" cy="8.500" r="6.500" fill="#139a3c" stroke="#222" stroke-width=".7" /><path d="M8 8.500L3 4a7 7 0 0 1 9.500-.5z" fill="#f4c20d" stroke="#222" stroke-width=".6" /><path d="M8 8.500l4.500-5a6.500 6.500 0 0 1 1 8.500z" fill="#d11" stroke="#222" stroke-width=".6" /><path d="M9 15.500h3.500V24H9z" fill="#f4c20d" /><path d="M13 10.500h3.500V24H13z" fill="#139a3c" /><path d="M17 17.500h3.500V24H17z" fill="#c11" /></symbol>
      <symbol id="i-labelpin" viewBox="0 0 24 24"><use href="#i-tag" width="24" height="24" /><text x="5.500" y="12.500" font-size="7.500" font-weight="700" fill="#333" font-family="DejaVu Sans">ab</text><path d="M17.500 8h3v8h-3z" fill="#ddd" stroke="#777" stroke-width=".6" /><circle cx="19.300" cy="18.500" r="4" fill="#b81f2b" stroke="#7d101a" stroke-width=".6" /></symbol>
      <symbol id="i-labeleye" viewBox="0 0 24 24"><use href="#i-label" width="24" height="24" /><path d="M8 19.500c4-5 11-5 15 0-4 4-11 4-15 0z" fill="#fff" stroke="#555" /><circle cx="15.500" cy="19" r="2.500" fill="#555" /></symbol>
      <symbol id="i-labelmove" viewBox="0 0 24 24"><use href="#i-label" width="24" height="24" /><rect x="12.500" y="13.500" width="11" height="11" rx="2" fill="#666" /><path d="M14.500 19h7M18.500 15.500L22 19l-3.500 3.500" fill="none" stroke="#fff" stroke-width="1.800" /></symbol>
      <symbol id="i-labelturn" viewBox="0 0 24 24"><use href="#i-label" width="24" height="24" /><rect x="12.500" y="13.500" width="11" height="11" rx="2" fill="#777" /><path d="M16 17.500c2.500-2.500 6 0 4.500 3l-2 2M15 20c0 1 0 2 1.500 2.500" fill="none" stroke="#fff" stroke-width="1.500" /></symbol>
      <symbol id="i-labeledit" viewBox="0 0 24 24"><use href="#i-label" width="24" height="24" /><rect x="13" y="13.500" width="10.500" height="10.500" rx="2" fill="#888" /><path d="M15.500 21.500l5.500-5.500" stroke="#fff" stroke-width="2" /></symbol>
      <symbol id="i-search" viewBox="0 0 24 24"><circle cx="12" cy="11.500" r="11" fill="#7f9fc6" stroke="#34526e" /><path d="M3 6l5-4 3 2-1 5-4 2zM13 3l6 1 3 6-3 4-5-3z" fill="#c2d4ea" /><path d="M12 .5v15M1 11h22M4 4.500c5 3 11 3 16 0" stroke="#44678f" fill="none" stroke-width=".9" /><path d="M6 21l3-7h2l1 2 1-2h2l3 7z" fill="#000" /><ellipse cx="7.500" cy="21" rx="3.300" ry="2.300" fill="#fff" stroke="#000" stroke-width="1.500" /><ellipse cx="17" cy="21" rx="3.300" ry="2.300" fill="#fff" stroke="#000" stroke-width="1.500" /></symbol>
      <symbol id="i-snake" viewBox="0 0 20 20"><path d="M9.500.5C5.500.5 5.500 2 5.500 3.500V5.500h5v1H3C.8 6.500 0 8.500 0 10.500s1 4 3 4h2v-2.500c0-2 1.500-3 3-3h4.500c1.500 0 2.500-1 2.500-2.500v-3c0-2-2-3-5.500-3z" fill="#3771a2" /><path d="M10.500 19.500c4 0 4-1.500 4-3v-2h-5v-1H17c2.200 0 3-2 3-4s-1-4-3-4h-1v2.500c0 2-1.500 2.500-3 2.500H8c-1.500 0-2.500 1-2.500 2.500v3.500c0 2 2 3 5 3z" fill="#ffd23f" /><circle cx="7.500" cy="3" r=".9" fill="#fff" /><circle cx="12.500" cy="17" r=".9" fill="#fff" /></symbol>
      <symbol id="i-python" viewBox="0 0 24 24"><use href="#i-snake" x="2" y="2" width="20" height="20" /><path d="M17 18l5.500 2.500L17 23" fill="none" stroke="#fff" stroke-width="3" /><path d="M17 17.500l5.500 2.500-5.500 2.500" fill="none" stroke="#555" stroke-width="1.300" /></symbol>
      <symbol id="i-help" viewBox="0 0 24 24"><rect x="2" y="1.500" width="20" height="20.500" fill="#5d88bd" stroke="#1f3c57" /><path d="M2 1.500h4.500V22H2z" fill="#1f3447" /><text x="10.500" y="17" font-size="14" fill="#fff" font-family="DejaVu Serif">?</text></symbol>

      <symbol id="i-add" viewBox="0 0 16 16"><rect x="1.500" y="1.500" width="11" height="12" fill="#f4f4f4" stroke="#777" /><circle cx="12" cy="12.500" r="3.300" fill="#569a66" stroke="#fff" stroke-width=".5" /><path d="M12 10.700v3.600M10.200 12.500h3.600" stroke="#fff" /></symbol>
      <symbol id="i-filter" viewBox="0 0 16 16"><path d="M1 1h14v2.500L10 9v6.500L6 13V9L1 3.500z" fill="#5d88b8" stroke="#41678f" stroke-width=".7" /><path d="M1 .8h14v2.400H1z" fill="#f2e03c" stroke="#b8a31b" stroke-width=".6" /></symbol>
      <symbol id="i-collapse" viewBox="0 0 16 16"><path d="M1 1.500h4.500M1 1.500v12h3M1 6h3" fill="none" stroke="#777" /><rect x="4" y="5" width="2.500" height="2.500" fill="#fff" stroke="#f0882d" /><rect x="4" y="11.500" width="2.500" height="2.500" fill="#fff" stroke="#f0882d" /><path d="M11 .5L15.500 6H13v8.500H9V6H6.500z" fill="#4c7db0" stroke="#2d5580" stroke-width=".7" /></symbol>
      <symbol id="i-expand" viewBox="0 0 16 16"><path d="M1 1.500h8M1 1.500v12h3M1 6h3" fill="none" stroke="#777" /><rect x="4" y="5" width="2.500" height="2.500" fill="#fff" stroke="#f0882d" /><rect x="4" y="11.500" width="2.500" height="2.500" fill="#fff" stroke="#f0882d" /><path d="M11 15L15.500 9.500H13V1H9v8.500H6.500z" fill="#4c7db0" stroke="#2d5580" stroke-width=".7" /></symbol>
      <symbol id="i-info" viewBox="0 0 16 16"><circle cx="8" cy="8" r="6.600" fill="#6b97cb" stroke="#5c88ba" /><text x="5.800" y="11.800" font-size="10" font-style="italic" font-weight="700" fill="#fff" font-family="DejaVu Serif">i</text></symbol>
      <symbol id="i-brush" viewBox="0 0 16 16"><path d="M9.500 7.500L14.500 2" stroke="#b67a2a" stroke-width="2" /><path d="M1 8l5-3 6 4-2 4-4 2z" fill="#fbd25a" /><path d="M1 8l3-2 4 8-2 1z" fill="#e24b42" /><path d="M8 5l5 4-1.500 2-5-4z" fill="#c9953a" /><path d="M1 9.500l3 .5-1 2z" fill="#4d86d6" /></symbol>
      <symbol id="i-addgroup" viewBox="0 0 16 16"><g fill="#f4f4f4" stroke="#777"><path d="M1.500 4.500h7v9h-7zM4.500 2.500h7v9h-7z" /><path d="M7.500 1.500h5v10h-5z" /></g><circle cx="12" cy="12.500" r="3.300" fill="#569a66" /><path d="M12 10.700v3.600M10.200 12.500h3.600" stroke="#fff" /></symbol>
      <symbol id="i-eye" viewBox="0 0 16 16"><path d="M.5 8C4 2.500 11 2.500 14.500 8 11 12 4 12 .5 8z" fill="#fff" stroke="#888" /><circle cx="7.500" cy="7.500" r="3.200" fill="#8fadcf" stroke="#678" stroke-width=".7" /><circle cx="7.500" cy="7.500" r="1.300" fill="#345" /><path d="M11 12.500h5L13.500 15z" fill="#555" /></symbol>
      <symbol id="i-epsilon" viewBox="0 0 16 16"><text x="0" y="9" font-size="14" font-weight="700" fill="#855c8d" font-family="DejaVu Sans">ε</text><path d="M9 15v-4a2.500 2.500 0 0 1 5 0v4M9 13.500h1.500M12.500 13.500H14" fill="none" stroke="#aaa" stroke-width="1.600" /></symbol>
      <symbol id="i-models" viewBox="0 0 16 16"><circle cx="5.500" cy="5" r="3.200" fill="#d5242b" stroke="#d5242b" stroke-width="3" stroke-dasharray="1.600 1" /><circle cx="5.500" cy="5" r="1.200" fill="#fff" /><circle cx="12.500" cy="8.500" r="2" fill="#777" stroke="#777" stroke-width="2" stroke-dasharray="1.200 .8" /><circle cx="8" cy="13" r="2" fill="#9db8e0" stroke="#9db8e0" stroke-width="2" stroke-dasharray="1.200 .8" /><path d="M12 13h5l-2.500 2.500z" fill="#444" /></symbol>
      <symbol id="i-scripts" viewBox="0 0 16 16"><use href="#i-snake" x="1" y="1" width="14" height="14" /><path d="M11.500 13h5l-2.500 2.500z" fill="#444" /></symbol>
      <symbol id="i-history" viewBox="0 0 16 16"><circle cx="8" cy="8" r="7" fill="#f6f6f6" stroke="#777" stroke-width="1.100" /><path d="M8 3v5.500l3.500 2.500" fill="none" stroke="#777" stroke-width="1.100" /></symbol>
      <symbol id="i-results" viewBox="0 0 16 16"><path d="M2.500.5h7l3.500 3.500v11.500H2.500z" fill="#f2f2f2" stroke="#999" /><path d="M4.500 5h6M4.500 7.500h6.500M4.500 10h6.500M4.500 12.500h6.500M9.500.5v4h3.500" fill="none" stroke="#999" /></symbol>
      <symbol id="i-inplace" viewBox="0 0 16 16"><rect x="1" y="1" width="10" height="9.500" fill="#fce24e" stroke="#c4a000" /><path d="M8 15l1-4 4.500-8L16 4.500 11.500 13z" fill="#c9b66c" stroke="#8f7d37" stroke-width=".6" /></symbol>

      <symbol id="i-merge" viewBox="0 0 16 16"><g fill="#e3e3e3" stroke="#999"><rect x="1.500" y="6.500" width="8" height="8" rx="1" /><rect x="3.500" y="4" width="8" height="8" rx="1" /><rect x="6.500" y="1.500" width="8" height="8" rx="1" /></g></symbol>
      <symbol id="i-split" viewBox="0 0 16 16"><rect x="1" y="1.500" width="5.500" height="13" fill="#eee" stroke="#aaa" stroke-width=".6" /><rect x="9.500" y="1.500" width="5.500" height="13" fill="#eee" stroke="#aaa" stroke-width=".6" /><path d="M8 0v16" stroke="#123" stroke-dasharray="1.500 1" /></symbol>

      <symbol id="i-star" viewBox="0 0 16 16"><path d="M8 .5l2.200 5.200 5.500.3-4.300 3.600 1.500 5.600L8 12.200l-4.900 3 1.500-5.600L.3 6l5.500-.3z" fill="#fbe94d" stroke="#c9a90b" stroke-width=".9" /></symbol>
      <symbol id="i-home" viewBox="0 0 16 16"><path d="M1.500 2.500h5l1.500 1.500h6.500v10h-13z" fill="#f2f2f2" stroke="#888" /><path d="M4 9.500L8 5.500l4 4M5.500 9v4h5V9" fill="none" stroke="#222" stroke-width="1.100" /></symbol>
      <symbol id="i-folder" viewBox="0 0 16 16"><path d="M1.500 2.500h5l1.500 1.500h6.500v10h-13z" fill="#eee" stroke="#888" /></symbol>
      <symbol id="i-elephant" viewBox="0 0 16 16"><path d="M1 4c0-4 4-3.500 6-2.500 3-1.500 9-1 8.500 3C15 8 13 11 12 11c0 0 2 0 3-.3-1 1.500-2.500 1.500-3.500 1.300 0 3-1 4-3 4S6 14 6 11c-2 1.500-3.500 0-4-2S1 6 1 4z" fill="#5480ab" stroke="#2e5175" stroke-width=".9" /><path d="M5.500 2.500C4.500 5 5 8 6.500 10M10.500 2.500c1.500 2 1 5 0 7.500" fill="none" stroke="#2e5175" stroke-width=".9" /></symbol>
      <symbol id="i-mssql" viewBox="0 0 16 16"><path d="M1 .5c6 0 11 3 14.500 6.500C11 8 5 9.500 1 13c2-4 3-8 0-12.500z" fill="#5f88b5" stroke="#33577d" stroke-width=".8" /><path d="M6 2c1.500 3 1 6-.5 8.500M10.500 4c.8 2 .5 3 0 5" fill="none" stroke="#c8daec" /></symbol>
      <symbol id="i-db2" viewBox="0 0 16 16"><rect width="16" height="16" rx="2" fill="#6b93c4" /><text x="1" y="10.500" font-size="6.500" fill="#fff" textLength="14" font-family="DejaVu Sans">DB2</text></symbol>
      <symbol id="i-tiles" viewBox="0 0 16 16"><rect x="1" y="1" width="14" height="14" fill="#d8e4f2" /><path d="M1 1h5v5H1zM10 1h5v5h-5zM5.700 5.700h4.600v4.600H5.700zM1 10.500h5V15H1z" fill="#26364a" /><path d="M10.300 6H15v4.500h-4.700zM6 10.500h4.300V15H6z" fill="#8eafd2" /></symbol>
      <symbol id="i-ows" viewBox="0 0 18 16"><ellipse cx="9" cy="8" rx="8.200" ry="7.200" fill="#f5f9fe" stroke="#6e9acb" /><path d="M.8 8h16.400M2.500 4h13M2.500 12h13M9 .8v14.400M9 1C4 5 4 11 9 15M9 1c5 4 5 10 0 14" fill="none" stroke="#6e9acb" stroke-width=".8" /></symbol>
      <symbol id="i-wcs" viewBox="0 0 18 16"><ellipse cx="9" cy="8" rx="8.200" ry="7.200" fill="#44698f" stroke="#2e4a68" /><path d="M1 5.500h16M1 11h16M9 1C4 5 4 11 9 15M9 1c5 4 5 10 0 14" fill="none" stroke="#bcd0e4" stroke-width=".9" /><path d="M7 6h4v4.500H7zM2 6h2.500v4.500H2zM13.500 6H16v4.500h-2.500z" fill="#cfe0f0" /></symbol>
      <symbol id="i-wfs" viewBox="0 0 18 16"><use href="#i-ows" width="18" height="16" /><path d="M4 4l4 8 3.500-8 2 .5" fill="none" stroke="#567" stroke-width="1.300" /></symbol>
      <symbol id="i-arcmap" viewBox="0 0 18 16"><use href="#i-globe" width="18" height="16" /><path d="M1 12c0-4 4-5 7-3 0 4-2 7-5 6z" fill="#26364a" /><path d="M3 11.500l2 1.500M6 10l.5 2" stroke="#fff" /></symbol>
      <symbol id="i-arcfeat" viewBox="0 0 18 16"><use href="#i-ows" width="18" height="16" /><path d="M9 3l3 6 3-6" fill="none" stroke="#345" /><path d="M1 12c0-4 4-5 7-3 0 4-2 7-5 6z" fill="#26364a" /><path d="M3 11.500l2 1.500M6 10l.5 2" stroke="#fff" /></symbol>
      <symbol id="i-geonode" viewBox="0 0 16 16"><path d="M8 1.500v13M2.300 4.700l11.400 6.600M13.700 4.700L2.300 11.300" stroke="#5d88b8" stroke-width="2.200" stroke-linecap="round" /><g fill="#5d88b8"><circle cx="8" cy="8" r="2.700" /><circle cx="8" cy="2" r="1.700" /><circle cx="8" cy="14" r="1.700" /><circle cx="2.500" cy="5" r="1.700" /><circle cx="13.500" cy="11" r="1.700" /><circle cx="13.500" cy="5" r="1.700" /><circle cx="2.500" cy="11" r="1.700" /></g></symbol>

      <symbol id="i-clock" viewBox="0 0 16 16"><circle cx="8" cy="8" r="7" fill="#b5d2e4" stroke="#8ba6b8" /><path d="M8 3v5.500l3.500 2.500" fill="none" stroke="#5d7a8e" stroke-width="1.100" /></symbol>
      <symbol id="i-check" viewBox="0 0 16 16"><path d="M2 8.500l4 4.500L14 3" fill="none" stroke="#6e8899" stroke-width="2.400" /></symbol>
      <symbol id="i-sum" viewBox="0 0 16 16"><path d="M3 2h10v3h-1c-.3-1-1-1.500-2-1.500H6L9.500 8 6 12.500h4.500c1 0 1.500-.5 2-1.500h1l-.5 3.500H3V13l4-5-4-4.500z" fill="#6e8899" /></symbol>
      <symbol id="i-qgis" viewBox="0 0 16 16"><circle cx="7.800" cy="7.700" r="5.600" fill="none" stroke="#75a32c" stroke-width="3" /><path d="M8 8.500h2.500L15.500 13v2.500h-3.500L8 11z" fill="#93b023" /><circle cx="7.800" cy="7.500" r="2.200" fill="#f6b07a" /><path d="M6.500 6l3 .8-.7 3z" fill="#e8712c" /></symbol>
      <symbol id="i-selectloc" viewBox="0 0 16 16"><rect x="1.500" y="1.500" width="9.500" height="9" fill="#fce24e" stroke="#d2b12d" /><path d="M13 15.500c-3-4-2-6 0-6s3 2 0 6z" fill="#7d96ab" /></symbol>
      <symbol id="i-gdal" viewBox="0 0 16 16"><path d="M4 5C6 2 13 1 15 6v5H4z" fill="#4fb0c6" /><path d="M8 5l4-1 2 3-3 2z" fill="#66b34f" /><path d="M0 4l7-4M3 1.500l3 4" stroke="#444" stroke-width="1.300" /><text x="0" y="15.800" font-size="7.500" font-weight="700" textLength="15" lengthAdjust="spacingAndGlyphs" font-family="DejaVu Sans">GDAL</text></symbol>
      <symbol id="i-grid" viewBox="0 0 16 16"><rect width="16" height="16" fill="#e9b0ae" /><path d="M0 0h4v16H0z" fill="#c0403c" /><path d="M4 4h4v8H4zM0 12h12v4H0zM0 8h4v4H0z" fill="#a91f1f" opacity=".75" /><path d="M8 8h4v4H8z" fill="#cf5a56" /><path d="M12 4h4v4h-4zM8 0h4v4H8z" fill="#f8e3e2" /><circle cx="12" cy="4.500" r="2" fill="#888" /></symbol>
      <symbol id="i-grass" viewBox="0 0 16 16"><path d="M8 1.200L13.800 7.500 8 13.500 2.200 7.500z" fill="#fff" stroke="#777" stroke-width=".9" /><path d="M2.200 9.500L8 15l5.800-5.500" fill="none" stroke="#444" stroke-width=".9" /><path d="M8 12C5 10 4.500 8 4.500 6.500 6.500 7.500 7.300 8.500 7.500 10c0-3 0-5 .7-7 .8 2 .8 4 .5 7 .3-2 1-3.300 2.800-4-.2 2.500-1 4.500-3.500 6z" fill="#3f9b48" /></symbol>
      <symbol id="i-lens" viewBox="0 0 14 14"><circle cx="5.500" cy="5.500" r="4.300" fill="none" stroke="#888" stroke-width="1.200" /><path d="M8.700 8.700l4 4" stroke="#888" stroke-width="1.400" /></symbol>
      <symbol id="i-memory" viewBox="0 0 16 14"><path d="M3.500 1v2.500M6.500 1v2.500M9.500 1v2.500M12.500 1v2.500M3.500 10.500V13M6.500 10.500V13M9.500 10.500V13M12.500 10.500V13" stroke="#777" /><path d="M1.500 3.500h13v2.500l-.8 1 .8 1v2.500h-13V8l.8-1-.8-1z" fill="#fff" stroke="#777" /></symbol>
      <symbol id="i-mouse" viewBox="0 0 16 16"><circle cx="10" cy="11.500" r="3.500" fill="#eee" stroke="#333" stroke-width="1.200" /><path d="M1 3l5 6M3 1l5 6M7 .5l1.500 5M1 9l5 2M10 8l5-6M12 9l3-3" stroke="#333" stroke-width="1.500" /><circle cx="10" cy="11.500" r="1.300" fill="#333" /></symbol>
      <symbol id="i-lock" viewBox="0 0 14 16"><path d="M3.500 7.500V5a3.500 3.500 0 0 1 7 0v2.500" fill="none" stroke="#777" stroke-width="1.700" /><rect x="1" y="7" width="12" height="8.500" rx="1" fill="#5e5e5e" /></symbol>
      <symbol id="i-crs" viewBox="0 0 16 16"><path d="M4 4.500C6 2 10 2 12 4.500v7c-2 2.500-6 2.500-8 0z" fill="#a5a5a5" /><path d="M8 1.500v13M.5 8h15M3 5h10M3 11h10M8 2C4 5 4 11 8 14M8 2c4 3 4 9 0 12M.5 8L4 4.500M.5 8L4 11.500M15.500 8L12 4.500M15.500 8L12 11.500" fill="none" stroke="#555" stroke-width=".8" /></symbol>
      <symbol id="i-message" viewBox="0 0 16 16"><path d="M8 1c4.500 0 7.500 2.500 7.500 6S13 12.500 11.500 12.700L12.500 16 8 13C3.500 13 .5 10.500.5 7S3.500 1 8 1z" fill="#555" /><g fill="#fff"><circle cx="4.500" cy="7" r="1" /><circle cx="8" cy="7" r="1" /><circle cx="11.500" cy="7" r="1" /></g></symbol>
      <symbol id="i-float" viewBox="0 0 11 11"><rect x=".5" y=".5" width="10" height="10" rx="1.500" fill="#eee" stroke="#666" /><path d="M4.500 2.500h4v4h-4zM2.500 4.500h4v4h-4z" fill="#eee" stroke="#444" stroke-width=".9" /></symbol>
      <symbol id="i-close" viewBox="0 0 11 11"><rect x=".5" y=".5" width="10" height="10" rx="1.500" fill="#eee" stroke="#666" /><path d="M3 3l5 5M8 3L3 8" stroke="#333" stroke-width="1.700" /></symbol>
      <symbol id="i-clear" viewBox="0 0 13 10"><path d="M4 0h9v10H4L0 5z" fill="#909090" /><path d="M5.500 2.500l5 5M10.500 2.500l-5 5" stroke="#fff" stroke-width="1.100" /></symbol>
    </svg>

    <nav class="menubar">
      <div v-for="m in menus" :key="m.text.join('')" class="menu-slot" :style="{ width: m.width + 'px' }">
        <span class="menu-title" :class="{ open: m.open }">{{ m.text[0] }}<u>{{ m.text[1] }}</u>{{ m.text[2] }}</span>
      </div>
    </nav>

    <div v-for="(bar, b) in [fileTools, editTools]" :key="b" class="toolbar">
      <span v-for="(t, i) in bar" :key="i" class="tool" :class="t.on" :style="{ width: t.width + 'px', marginLeft: t.lead + 'px' }">
        <svg :width="t.width" height="24"><use :href="'#i-' + t.icon" /></svg>
      </span>
    </div>

    <main class="workspace">
      <aside class="side-left">
        <header class="dock-title">
          <span>Browser</span>
          <svg width="11" height="11"><use href="#i-float" /></svg><svg width="11" height="11"><use href="#i-close" /></svg>
        </header>
        <div class="dock-tools browser-tools">
          <svg v-for="n in ['add', 'refresh', 'filter', 'collapse', 'info']" :key="n" width="16" height="16"><use :href="'#i-' + n" /></svg>
        </div>
        <ul class="tree browser-tree">
          <li v-for="r in browser" :key="r.text" :class="{ selected: r.on, child: r.child }">
            <i class="arrow" :class="r.arrow" />
            <svg width="16" height="16"><use :href="'#i-' + r.icon" /></svg>
            <span>{{ r.text }}</span>
          </li>
        </ul>
        <div class="splitter" />
        <header class="dock-title">
          <span>Layers</span>
          <svg width="11" height="11"><use href="#i-float" /></svg><svg width="11" height="11"><use href="#i-close" /></svg>
        </header>
        <div class="dock-tools layer-tools">
          <svg v-for="n in ['brush', 'addgroup', 'eye', 'filter', 'epsilon']" :key="n" width="16" height="16"><use :href="'#i-' + n" /></svg>
          <svg class="drop" width="9" height="24"><use href="#i-drop" /></svg>
          <svg class="expand" width="16" height="16"><use href="#i-expand" /></svg>
          <svg class="push" width="12" height="24"><use href="#i-more" /></svg>
        </div>
        <ul class="tree layer-tree">
          <li v-for="l in layers" :key="l.text" :class="{ selected: l.on }">
            <span class="checkbox"><svg width="12" height="12" viewBox="0 0 12 12"><path d="M2.500 5.500l2.500 4 4.500-8" fill="none" stroke="#000" stroke-width="1.900" /></svg></span>
            <i class="swatch" :class="l.tone" />
            <b>{{ l.text }}</b>
            <svg v-if="l.memory" class="memory" width="16" height="14"><use href="#i-memory" /></svg>
          </li>
        </ul>
      </aside>

      <section class="canvas">
        <svg width="768" height="1282" viewBox="209 99 768 1282">
          <path :d="land" fill="#e15989" stroke="#2e272b" stroke-width="1.100" stroke-linejoin="round" />
          <path :d="islands" fill="#e15989" stroke="#2e272b" stroke-width="1.100" />
          <path :d="borders" fill="none" stroke="#2e272b" stroke-width="1" />
          <path :d="tracts" fill="none" stroke="#2e272b" stroke-width=".9" />
        </svg>
      </section>

      <aside class="side-right">
        <header class="dock-title">
          <span>Processing Toolbox</span>
          <svg width="11" height="11"><use href="#i-float" /></svg><svg width="11" height="11"><use href="#i-close" /></svg>
        </header>
        <div class="dock-tools toolbox-tools">
          <svg v-for="n in ['models', 'scripts', 'history', 'results']" :key="n" width="16" height="16"><use :href="'#i-' + n" /></svg>
          <i class="rule" />
          <svg width="16" height="16"><use href="#i-inplace" /></svg>
          <svg class="push" width="12" height="24"><use href="#i-more" /></svg>
        </div>
        <div class="filter">
          <svg width="14" height="14"><use href="#i-lens" /></svg>
          <span>ch</span>
          <svg width="13" height="10"><use href="#i-clear" /></svg>
        </div>
        <ul class="tree toolbox-tree">
          <li v-for="(r, i) in toolbox" :key="i" :class="['d' + r[0], { selected: r[3], plain: !r[1] }]">
            <i class="arrow" :class="{ down: r[0] === 0 || !r[1] }" />
            <svg v-if="r[1]" width="16" height="16"><use :href="'#i-' + r[1]" /></svg>
            <span>{{ r[2] }}</span>
          </li>
        </ul>
      </aside>
    </main>

    <footer class="status">
      <div class="field locate"><svg width="14" height="14"><use href="#i-lens" /></svg><span>Type to locate (Ctrl+K)</span></div>
      <span class="legend">4 legend</span>
      <span class="coord-label">Coordinate</span>
      <div class="field coord">246958,3478821</div>
      <svg class="mouse" width="16" height="18"><use href="#i-mouse" /></svg>
      <span class="scale-label">Scale</span>
      <div class="field scale"><span>1:2607308</span><i class="combo"><i class="arrow down" /></i></div>
      <svg class="lock" width="14" height="17"><use href="#i-lock" /></svg>
      <span class="mag-label">Magnifier</span>
      <div class="field mag"><span>100%</span><i class="spin"><i class="arrow up" /><i class="arrow down" /></i></div>
      <span class="rot-label">Rotation</span>
      <div class="field rot"><span>0.0 °</span><i class="spin"><i class="arrow up" /><i class="arrow down" /></i></div>
      <span class="checkbox"><svg width="12" height="12" viewBox="0 0 12 12"><path d="M2.500 5.500l2.500 4 4.500-8" fill="none" stroke="#000" stroke-width="1.900" /></svg></span>
      <span class="render-label">Render</span>
      <svg class="crs" width="16" height="16"><use href="#i-crs" /></svg>
      <span class="epsg">EPSG:26911</span>
      <svg class="message" width="17" height="16"><use href="#i-message" /></svg>
      <i class="size-grip" />
    </footer>

    <div class="popup vector-menu">
      <div v-for="m in vectorMenu" :key="m.text.join('')" class="entry" :class="{ active: m.on }">
        <span>{{ m.text[0] }}<u>{{ m.text[1] }}</u>{{ m.text[2] }}</span>
        <i class="arrow right" />
      </div>
    </div>
    <div class="popup data-menu">
      <div v-for="m in dataMenu" :key="m.text" class="entry" :class="{ active: m.on }">
        <svg width="16" height="16"><use :href="'#i-' + m.icon" /></svg>
        <span>{{ m.text }}</span>
      </div>
    </div>
  </div>
</template>

<style>
body { margin: 0; overflow: hidden; }
</style>

<style scoped>
.window {
  position: relative;
  box-sizing: border-box;
  width: 1141px;
  height: 1411px;
  display: flex;
  flex-direction: column;
  background: #efefef;
  color: #000;
  font: 12px/18px "DejaVu Sans", sans-serif;
  overflow: hidden;
  white-space: nowrap;
}
.window *, .window *::before { box-sizing: border-box; }
svg { display: block; flex: none; overflow: visible; }
.defs { display: none; }
u { text-decoration: underline; text-underline-offset: 2px; text-decoration-thickness: 1px; }

.menubar { display: flex; height: 20px; padding-left: 6px; border-bottom: 1px solid #dcdcdc; flex: none; }
.menu-slot { flex: none; }
.menu-title { display: inline-block; height: 20px; line-height: 20px; padding: 0 4px; letter-spacing: .05px; }
.menu-title.open { width: 48px; background: #308cc6; color: #fff; box-shadow: inset 0 0 0 1px #2574a8; }

.toolbar { display: flex; align-items: center; flex: none; height: 39px; border-bottom: 1px solid #b4b4b4; background: linear-gradient(#fafafa, #ededed); }
.tool { flex: none; height: 24px; }
.tool.dim, .tool.faded { opacity: .35; filter: grayscale(1); }
.tool.faded { filter: grayscale(.85); }
.tool.checked { border-radius: 2px; background: #dcdcdc; box-shadow: 0 0 0 3px #dcdcdc, 0 0 0 4px #aaa; }
.tool.framed svg { outline: 1px solid #2a70d8; outline-offset: -1px; }

.workspace { display: flex; flex: none; height: 1284px; }
.side-left { width: 202px; display: flex; flex-direction: column; }
.dock-title { display: flex; align-items: center; gap: 3px; flex: none; height: 19px; padding: 0 2px 0 4px; letter-spacing: .1px; }
.dock-title span { flex: 1; }
.dock-tools { display: flex; align-items: center; flex: none; height: 30px; margin-bottom: 1px; padding-left: 8px; gap: 9px; }
.layer-tools .drop { margin-left: -3px; }
.layer-tools .expand { margin-left: -2px; }
.push { margin-left: auto; margin-right: 2px; }
.tree { margin: 0; padding: 0; list-style: none; background: #fff; border: 1px solid #b4b4b4; }
.tree li { display: flex; align-items: center; height: 18px; }
.browser-tree { height: 654px; flex: none; }
.browser-tree li { padding-left: 5px; }
.browser-tree li svg { margin: 0 6px 0 8px; }
.browser-tree li span { padding-top: 2px; letter-spacing: .05px; }
.browser-tree li.child svg { margin-left: 29px; margin-right: 5px; }
.browser-tree li.selected { width: 173px; }
.selected { background: #308cc6; color: #fff; }
.splitter { height: 6px; flex: none; margin: 0 94px; background: radial-gradient(circle, #bbb .7px, transparent 1px) 0 -1px/3px 6px; }
.layer-tree { flex: 1; }
.layer-tree li { padding-left: 23px; }
.checkbox { display: flex; align-items: center; justify-content: center; flex: none; width: 14px; height: 14px; border: 1px solid #b0b0b0; background: #fff; }
.swatch { width: 16px; height: 16px; margin: 0 6px; border: 1px solid; }
.amber { background: #e5b636; border-color: #9c7d2a; }
.pink { background: #e15989; border-color: #9c4061; }
.green { background: #91b873; border-color: #64804f; }
.rose { background: #e77490; border-color: #a05466; }
.dot { width: 7px; height: 7px; margin: 0 11px 0 10px; border-radius: 50%; background: #c43c39; border-color: #8e2c2a; }
.layer-tree b { padding-top: 1px; }
.layer-tree .selected b { text-decoration: underline; text-underline-offset: 3px; text-decoration-thickness: 1px; }
.memory { margin-left: auto; margin-right: 1px; }

.canvas { width: 770px; margin-left: 6px; flex: none; background: #fff; border: 1px solid #b4b4b4; }

.side-right { width: 157px; margin-left: 6px; display: flex; flex-direction: column; }
.toolbox-tools .rule { width: 1px; height: 10px; margin: 0 0 0 -1px; background: #ccc; }
.toolbox-tools .push { margin-right: 3px; }
.filter { display: flex; align-items: center; flex: none; height: 23px; padding: 0 8px; border: 1px solid #aaa; border-radius: 3px; background: #fff; }
.filter span { flex: 1; padding-left: 6px; }
.toolbox-tree { flex: 1; }
.toolbox-tree li { padding-left: 5px; }
.toolbox-tree li svg { margin: 0 6px 0 8px; }
.toolbox-tree li span { padding-top: 2px; }
.toolbox-tree li.d1 { padding-left: 25px; }
.toolbox-tree li.d2 { padding-left: 45px; }
.toolbox-tree li.plain { height: 15px; }
.toolbox-tree li.plain span { padding-top: 0; }
.toolbox-tree li.plain .arrow { margin-right: 8px; }

.arrow { position: relative; display: block; width: 10px; height: 10px; flex: none; }
.arrow::before { content: ''; position: absolute; border: 4px solid transparent; }
.arrow.right::before { left: 3px; top: 1px; border-left-color: #555; border-right: 0; }
.arrow.down::before { left: 1px; top: 3px; border-top-color: #555; border-bottom: 0; }
.arrow.up::before { left: 1px; top: 3px; border-bottom-color: #555; border-top: 0; }
.selected .arrow.down::before { border-top-color: #1a3a50; }

.status { position: relative; display: flex; align-items: center; flex: none; height: 29px; font-size: 9px; }
.field { display: flex; align-items: center; height: 23px; flex: none; border: 1px solid #aaa; border-radius: 3px; background: #fff; padding-left: 4px; overflow: hidden; }
.status > span, .status > svg { flex: none; }
.locate { width: 248px; margin-left: 4px; padding-left: 8px; font-size: 12px; color: #8a8a8a; letter-spacing: .08px; }
.locate span { margin-left: 6px; }
.legend { width: 38px; margin-left: 8px; }
.coord-label { width: 50px; margin-left: 9px; }
.coord { width: 87px; margin-left: 3px; height: 21px; padding-left: 3px; }
.mouse { margin-left: 4px; }
.scale-label { width: 25px; margin-left: 13px; }
.scale { width: 96px; margin-left: 3px; padding-left: 3px; }
.combo, .spin { display: flex; flex-direction: column; align-items: center; justify-content: center; margin-left: auto; height: 100%; border-left: 1px solid #b4b4b4; background: #f6f6f6; }
.combo { width: 21px; }
.spin { width: 14px; }
.lock { margin-left: 11px; }
.mag-label { width: 43px; margin-left: 8px; }
.mag { width: 95px; margin-left: 3px; }
.rot-label { width: 40px; margin-left: 9px; }
.rot { width: 91px; margin-left: 7px; }
.status .checkbox { margin-left: 6px; }
.render-label { width: 34px; margin-left: 5px; }
.crs { margin-left: 14px; }
.epsg { width: 56px; margin-left: 2px; }
.message { margin-left: 23px; }
.size-grip { width: 11px; height: 11px; margin: auto 1px 1px auto; background: radial-gradient(circle, #aaa .8px, transparent 1px) 0 0/3.600px 3.600px; clip-path: polygon(100% 0, 100% 100%, 0 100%); }

.popup { position: absolute; background: #fff; }
.popup::before { content: ''; position: absolute; inset: 0; border: 1px solid #8c8c8c; pointer-events: none; }
.vector-menu { left: 312px; top: 20px; width: 220px; letter-spacing: .1px; }
.data-menu { left: 531px; top: 89px; width: 268px; }
.entry { position: relative; display: flex; align-items: center; height: 23px; }
.entry.active { background: #308cc6; color: #fff; box-shadow: inset 0 0 0 1px #2371a5; }
.vector-menu .entry { padding: 0 3px 0 28px; justify-content: space-between; }
.vector-menu .active .arrow::before { border-left-color: #b9d9ee; }
.data-menu .entry { padding-left: 7px; gap: 5px; }
</style>
